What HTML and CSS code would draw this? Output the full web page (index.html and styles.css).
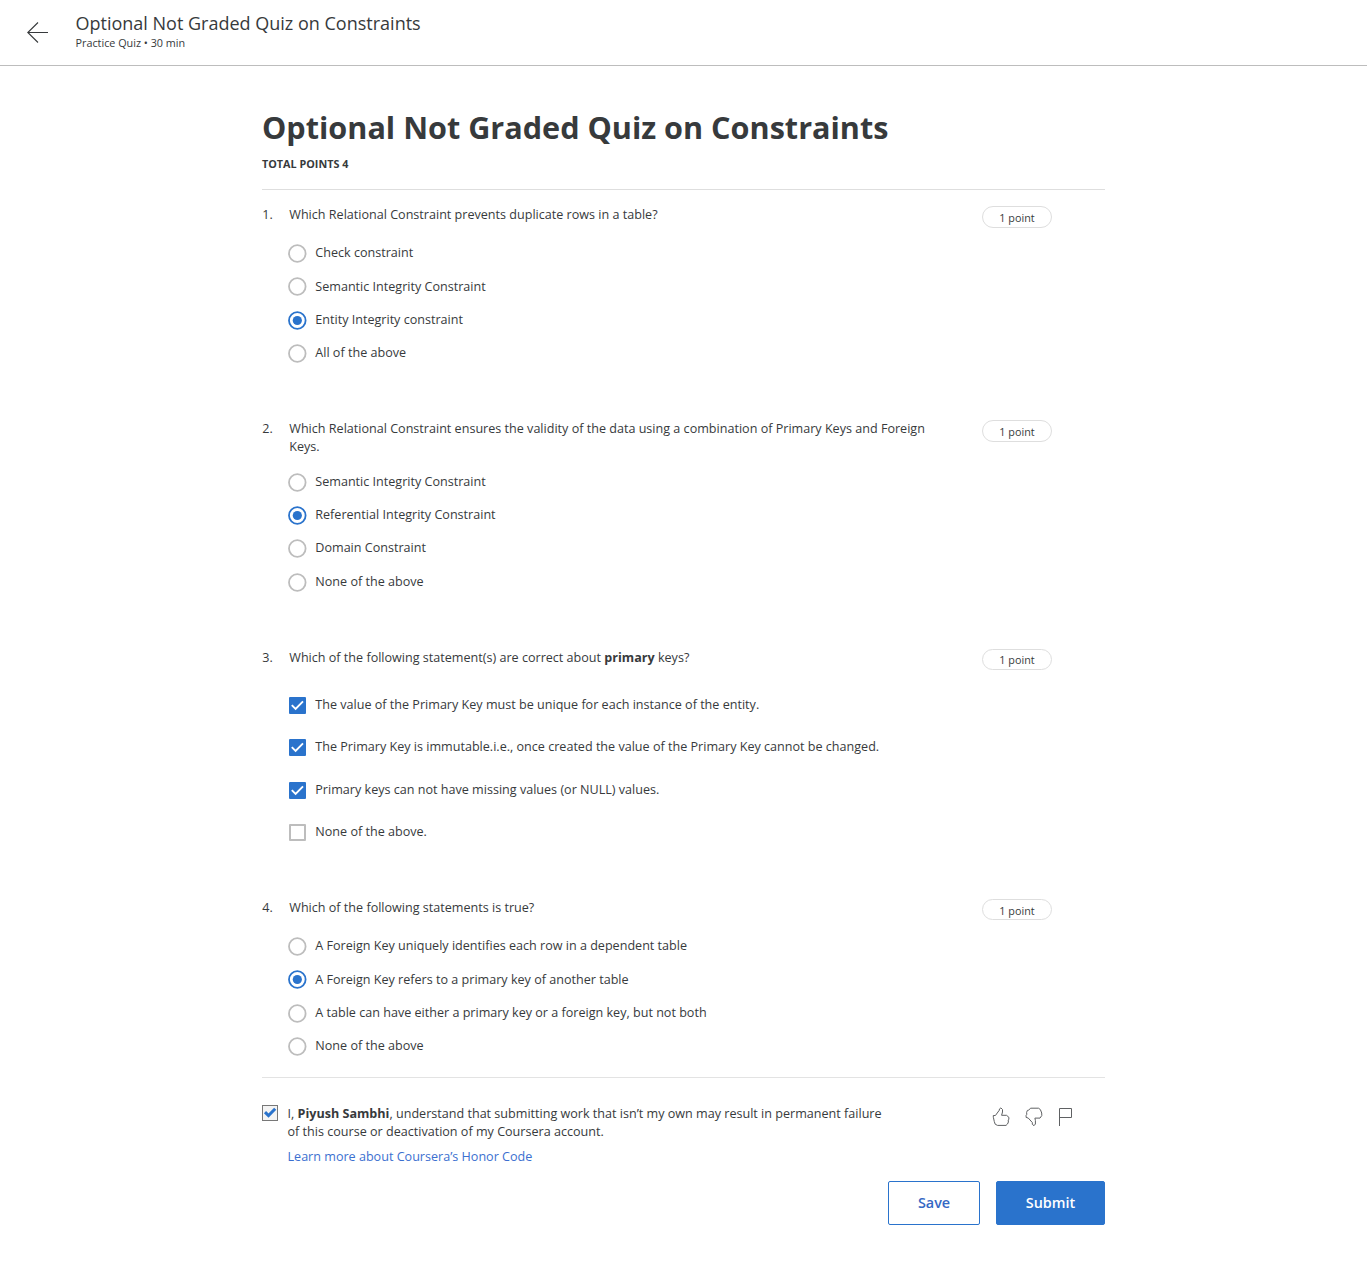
FILE: index.html
```html
<!DOCTYPE html>
<html lang="en">
<head>
<meta charset="utf-8">
<title>Optional Not Graded Quiz on Constraints</title>
<link rel="stylesheet" href="styles.css">
</head>
<body>
<header class="topbar">
  <svg class="back" viewBox="0 0 22 22"><path d="M21 10.5H0.8M11 0.5L0.8 10.5L11 20.5"/></svg>
  <div>
    <div class="topbar-title">Optional Not Graded Quiz on Constraints</div>
    <div class="topbar-sub">Practice Quiz • 30 min</div>
  </div>
</header>
<main class="quiz">
  <h1 class="title">Optional Not Graded Quiz on Constraints</h1>
  <div class="total">TOTAL POINTS 4</div>

  <section class="question q1">
    <div class="prompt"><span class="num">1.</span><p class="text">Which Relational Constraint prevents duplicate rows in a table?</p><span class="points">1 point</span></div>
    <div class="options">
      <div class="option"><svg class="radio" viewBox="0 0 19 19"><circle cx="9.3" cy="9.5" r="8.3"/></svg><span class="label">Check constraint</span></div>
      <div class="option"><svg class="radio" viewBox="0 0 19 19"><circle cx="9.3" cy="9.5" r="8.3"/></svg><span class="label">Semantic Integrity Constraint</span></div>
      <div class="option"><svg class="radio on" viewBox="0 0 19 19"><circle cx="9.3" cy="9.5" r="8.3"/><circle class="dot" cx="9.3" cy="9.5" r="4.6"/></svg><span class="label">Entity Integrity constraint</span></div>
      <div class="option"><svg class="radio" viewBox="0 0 19 19"><circle cx="9.3" cy="9.5" r="8.3"/></svg><span class="label">All of the above</span></div>
    </div>
  </section>

  <section class="question q2">
    <div class="prompt"><span class="num">2.</span><p class="text">Which Relational Constraint ensures the validity of the data using a combination of Primary Keys and Foreign<br>Keys.</p><span class="points">1 point</span></div>
    <div class="options">
      <div class="option"><svg class="radio" viewBox="0 0 19 19"><circle cx="9.3" cy="9.5" r="8.3"/></svg><span class="label">Semantic Integrity Constraint</span></div>
      <div class="option"><svg class="radio on" viewBox="0 0 19 19"><circle cx="9.3" cy="9.5" r="8.3"/><circle class="dot" cx="9.3" cy="9.5" r="4.6"/></svg><span class="label">Referential Integrity Constraint</span></div>
      <div class="option"><svg class="radio" viewBox="0 0 19 19"><circle cx="9.3" cy="9.5" r="8.3"/></svg><span class="label">Domain Constraint</span></div>
      <div class="option"><svg class="radio" viewBox="0 0 19 19"><circle cx="9.3" cy="9.5" r="8.3"/></svg><span class="label">None of the above</span></div>
    </div>
  </section>

  <section class="question q3">
    <div class="prompt"><span class="num">3.</span><p class="text">Which of the following statement(s) are correct about <b>primary</b> keys?</p><span class="points">1 point</span></div>
    <div class="options checks">
      <div class="option"><span class="check on"><svg viewBox="0 0 17 17"><path d="M2.8 8.2L6.6 12L14 4.3"/></svg></span><span class="label">The value of the Primary Key must be unique for each instance of the entity.</span></div>
      <div class="option"><span class="check on"><svg viewBox="0 0 17 17"><path d="M2.8 8.2L6.6 12L14 4.3"/></svg></span><span class="label">The Primary Key is immutable.i.e., once created the value of the Primary Key cannot be changed.</span></div>
      <div class="option"><span class="check on"><svg viewBox="0 0 17 17"><path d="M2.8 8.2L6.6 12L14 4.3"/></svg></span><span class="label">Primary keys can not have missing values (or NULL) values.</span></div>
      <div class="option"><span class="check"></span><span class="label">None of the above.</span></div>
    </div>
  </section>

  <section class="question q4">
    <div class="prompt"><span class="num">4.</span><p class="text">Which of the following statements is true?</p><span class="points">1 point</span></div>
    <div class="options">
      <div class="option"><svg class="radio" viewBox="0 0 19 19"><circle cx="9.3" cy="9.5" r="8.3"/></svg><span class="label">A Foreign Key uniquely identifies each row in a dependent table</span></div>
      <div class="option"><svg class="radio on" viewBox="0 0 19 19"><circle cx="9.3" cy="9.5" r="8.3"/><circle class="dot" cx="9.3" cy="9.5" r="4.6"/></svg><span class="label">A Foreign Key refers to a primary key of another table</span></div>
      <div class="option"><svg class="radio" viewBox="0 0 19 19"><circle cx="9.3" cy="9.5" r="8.3"/></svg><span class="label">A table can have either a primary key or a foreign key, but not both</span></div>
      <div class="option"><svg class="radio" viewBox="0 0 19 19"><circle cx="9.3" cy="9.5" r="8.3"/></svg><span class="label">None of the above</span></div>
    </div>
  </section>

  <footer class="honor">
    <span class="agree"><svg viewBox="0 0 14 14"><path d="M2 6.2L5.5 9.6L12.2 2.8"/></svg></span>
    <div class="honor-text">
      <p class="pledge">I, <b>Piyush Sambhi</b>, understand that submitting work that isn’t my own may result in permanent failure<br>of this course or deactivation of my Coursera account.</p>
      <a class="link">Learn more about Coursera’s Honor Code</a>
    </div>
    <div class="feedback">
      <svg viewBox="0 0 20 20"><path d="M2.3 10.4V8.5H4.4L8.4 3.1V2L9.9 0.9L11.5 2.5V5L10.6 8.3H15.5L17.8 10.2L17.9 12.2L17.2 13L17.4 15L16.5 17L15 18.4H6.5L4.2 17.2L3.3 14.6L2.4 10.4Z"/></svg>
      <svg viewBox="0 0 20 20"><path d="M4.7 3.2L6.5 1.2H14.5L16.4 2.6L17.7 6L17.8 8.5L16 11.1H10.9L11.4 13.5V17L10 18.7L8.3 17.3V15.5L4.3 11.1L2.1 10.4V8.4L2.8 7.3L2.6 5.5L3.4 3.4Z"/></svg>
      <svg viewBox="0 0 20 20"><path d="M2.5 19V1.5H14.5V10.5H2.5"/></svg>
    </div>
  </footer>
  <div class="actions"><button class="btn save">Save</button><button class="btn submit">Submit</button></div>
</main>
</body>
</html>
```
FILE: styles.css
```css
* { box-sizing: border-box; }
body { margin: 0; background: #fff; color: #373a3c; font-family: "Open Sans", sans-serif; font-size: 12.59px; line-height: 18px; }
p, h1 { margin: 0; }
.topbar { height: 66px; border-bottom: 1px solid #bdbdbd; display: flex; padding: 11px 0 0 27px; gap: 26.5px; }
.back { width: 22px; height: 22px; margin-top: 11px; fill: none; stroke: #373a3c; stroke-width: 1.1; }
.topbar-title { font-size: 18px; line-height: 24px; }
.topbar-sub { font-size: 10.8px; line-height: 16px; }
.quiz { width: 843px; margin-left: 262px; }
.title { padding-top: 39px; font-size: 30.6px; line-height: 44px; font-weight: 700; white-space: nowrap; }
.total { height: 41px; padding-top: 7px; font-size: 10.8px; line-height: 16px; font-weight: 700; border-bottom: 1px solid #dedede; }
.question { white-space: nowrap; }
.q1 { height: 214px; margin-top: 16px; }
.q2 { height: 229px; }
.q3 { height: 250px; }
.q4 { height: 179px; border-bottom: 1.5px solid #e3e3e3; }
.prompt { display: flex; height: 18px; }
.q2 .prompt { height: 36px; }
.num { width: 27px; padding-left: 0.3px; }
.text { width: 693px; padding-left: 0.3px; }
.points { width: 70px; height: 22px; border: 1px solid #dedede; border-radius: 11px; font-size: 10.8px; line-height: 22px; text-align: center; }
.q3 .points { height: 21px; line-height: 20px; }
.q4 .points { height: 21px; }
.options { padding: 13px 0 0 26px; }
.q2 .options { padding-top: 9.5px; }
.option { display: flex; align-items: center; height: 33.3px; gap: 8px; }
.q4 .options { padding-top: 13px; }
.q3 .checks { padding-top: 17.4px; }
.checks .option { height: 42.25px; padding-left: 1px; gap: 9px; }
.label { padding: 0 0 0.8px 0.3px; }
.radio { width: 19px; height: 19px; fill: none; stroke: #bdbdbd; stroke-width: 1.8; }
.radio.on { stroke: #2a73cc; }
.radio .dot { fill: #2a73cc; stroke: none; }
.check { width: 17px; height: 17px; border: 2px solid #bdbdbd; border-radius: 1px; }
.check.on { border: 0; background: #2a73cc; }
.check svg, .agree svg { display: block; width: 100%; height: 100%; fill: none; stroke: #fff; stroke-width: 1.9; }
.honor { display: flex; padding-top: 27px; white-space: nowrap; }
.agree { width: 16px; height: 16px; border: 1px solid #777; background: #f4f4f4; margin: 0 9.5px 0 0; }
.agree svg { stroke: #2a73cc; stroke-width: 3; }
.honor-text { width: 703px; }
.link { display: block; margin-top: 7px; color: #3b6fd0; }
.feedback { display: flex; gap: 13px; margin-top: 2px; }
.feedback svg { width: 20px; height: 20px; fill: none; stroke: #5f6163; stroke-width: 1; stroke-linejoin: round; }
.actions { display: flex; justify-content: flex-end; gap: 16px; margin-top: 15px; }
.btn { height: 44px; border: 1px solid #2a73cc; border-radius: 2px; font: 600 14.4px/20px "Open Sans", sans-serif; padding: 0; }
.save { width: 92px; background: #fff; color: #3568c4; }
.submit { width: 109px; background: #2a73cc; color: #fff; }
```
